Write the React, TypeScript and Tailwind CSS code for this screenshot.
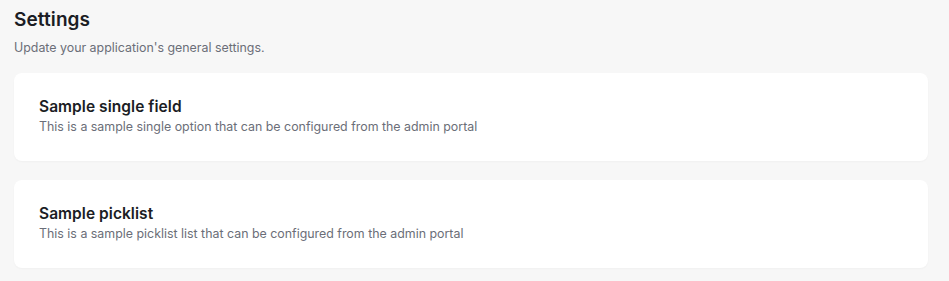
export default function App() {
  const cards = [
    { title: "Sample single field", desc: "This is a sample single option that can be configured from the admin portal" },
    { title: "Sample picklist", desc: "This is a sample picklist list that can be configured from the admin portal" },
  ];
  return (
    <div className="min-h-[281px] bg-[#f7f7f7] pl-[14px] pr-[21px] pt-[8px] pb-[13px]" style={{ fontFamily: "Inter, 'Noto Sans', sans-serif" }}>
      <h1 className="text-[19px] leading-[24px] tracking-[0.1px] font-semibold text-[#1b1d24]">Settings</h1>
      <p className="mt-[8px] text-[12.4px] leading-[16px] text-[#6b6e78]">Update your application's general settings.</p>
      <div className="mt-[17px] flex flex-col gap-[19px]">
        {cards.map((c) => (
          <div key={c.title} className="h-[88px] rounded-[8px] bg-white px-[25px] pt-[24px] shadow-[0_1px_2px_rgba(0,0,0,0.03)]">
            <div className="text-[15.5px] leading-[20px] tracking-[0.05px] font-semibold text-[#1b1d24]">{c.title}</div>
            <div className="mt-[2px] text-[12.4px] leading-[16px] text-[#6b6e78]">{c.desc}</div>
          </div>
        ))}
      </div>
    </div>
  );
}
